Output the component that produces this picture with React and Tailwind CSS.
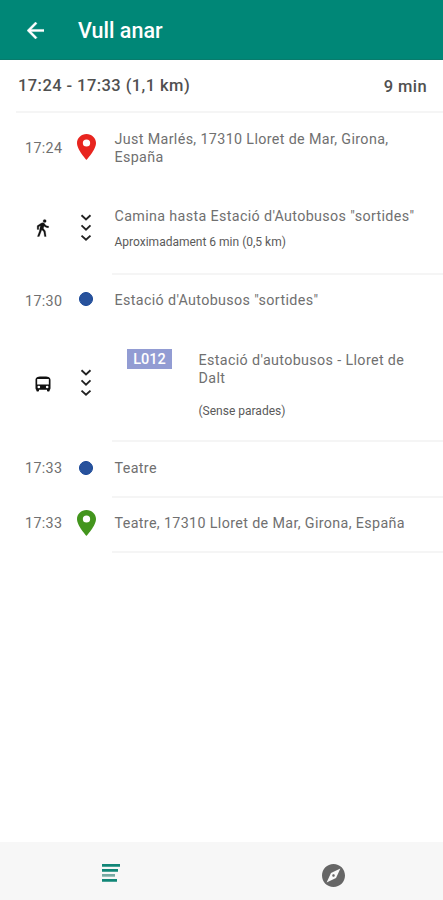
import React from "react";

const MAIN = "text-[14.3px] leading-[18px] tracking-[0.36px] text-[#707070]";
const SMALL = "text-[12px] leading-[16px] text-[#5a5a5a]";

function Pin({ className }) {
  return (
    <svg viewBox="5 2 14 20" preserveAspectRatio="none" className={`h-[26px] w-[19px] ${className}`} fill="currentColor">
      <path d="M12 2C8.13 2 5 5.13 5 9c0 5.25 7 13 7 13s7-7.75 7-13c0-3.87-3.13-7-7-7zm0 9.700a2.700 2.700 0 1 1 0-5.400 2.700 2.700 0 0 1 0 5.400z" />
    </svg>
  );
}

function Chevrons({ className }) {
  return (
    <svg viewBox="0 0 12 28" className={`mr-px h-7 w-3 ${className}`} fill="none" stroke="#222" strokeWidth="1.9">
      <path d="M1.5 1.2 6 5.4l4.5-4.2" />
      <path d="M1.5 11.4 6 15.6l4.5-4.2" />
      <path d="M1.5 21.6 6 25.8l4.5-4.2" />
    </svg>
  );
}

function Dot({ className }) {
  return <span className={`h-[14px] w-[14px] rounded-full border border-[#164596] bg-[#28529c] ${className}`} />;
}

function Walk() {
  return (
    <svg viewBox="0 0 24 24" className="mb-[3px] h-5 w-5" fill="#111" stroke="#111" strokeWidth=".3">
      <path d="M14 5.500a1.900 1.900 0 1 0 0-3.800 1.900 1.900 0 0 0 0 3.800zM9.700 6.200 5 9.400v4.300h1.900v-3.200l2-1.200-1.300 6.500-2.300 6.400h2.200l2.200-5.800.9-2.200 2.300 2.300.9 5.700h2l-1-6.700-2.300-2.800.7-3.200c1.200 1.400 3 2.100 5.500 2.100V9.700c-2 0-3.300-.7-4.200-2l-.8-1.200c-.8-.9-1.700-1-2.600-.7z" />
    </svg>
  );
}

function Bus() {
  return (
    <svg viewBox="0 0 24 24" className="h-5 w-5" fill="#111">
      <path fillRule="evenodd" d="M12 3c-5.500 0-9 .5-9 4.300V17c0 .9.400 1.700 1 2.200V20c0 .6.400 1 1 1h1.200c.6 0 1-.4 1-1v-1h9.600v1c0 .6.400 1 1 1H19c.6 0 1-.4 1-1v-.8c.6-.5 1-1.300 1-2.200V7.300C21 3.500 17.500 3 12 3zM5 6h14v6.500H5zM7 14a1.600 1.600 0 1 0 0 3.200 1.600 1.600 0 0 0 0-3.200zm10 0a1.600 1.600 0 1 0 0 3.200 1.600 1.600 0 0 0 0-3.200z" />
    </svg>
  );
}

function Row({ lead, marker, className, line = true, children }) {
  return (
    <div className={`flex ${className}`}>
      <div className="flex w-[72px] shrink-0 items-center pl-[25px] text-[14.3px] tracking-[0.36px] text-[#707070]">{lead}</div>
      <div className="flex w-7 shrink-0 items-center justify-center">{marker}</div>
      <div className={`ml-3 flex flex-1 flex-col justify-center pl-[2.500px] ${line ? "border-b-2 border-[#f5f5f5]" : ""}`}>
        {children}
      </div>
    </div>
  );
}

export default function App() {
  return (
    <div className="flex h-[900px] w-[443px] flex-col overflow-hidden bg-white font-[Roboto,sans-serif]">
      <header className="flex h-[60px] shrink-0 items-center border-b border-[#087b6c] bg-[#008777] text-white">
        <svg viewBox="4 4 16 16" className="mt-[2px] ml-[27px] h-[17px] w-[17px]" fill="currentColor" stroke="currentColor" strokeWidth=".4">
          <path d="M20 11H7.830l5.590-5.590L12 4l-8 8 8 8 1.410-1.410L7.830 13H20v-2z" />
        </svg>
        <h1 className="mt-[3px] ml-[34px] text-[21.5px] font-medium">Vull anar</h1>
      </header>
      <main className="flex flex-1 flex-col">
        <div className="ml-4 flex h-[53px] items-center justify-between border-b-2 border-[#f5f5f5] pr-4 pl-[2px] text-[16.500px] font-medium text-[#505050]">
          <span className="pt-[2px] tracking-[0.43px]">17:24 - 17:33 (1,1 km)</span>
          <span className="pt-[4px] tracking-[0.4px]">9 min</span>
        </div>
        <Row className="h-[71px]" line={false} lead={<span className="pt-px">17:24</span>} marker={<Pin className="mb-[3px] text-[#e8251f]" />}>
          <p className={`mb-px ${MAIN}`}>Just Marlés, 17310 Lloret de Mar, Girona,<br />España</p>
        </Row>
        <Row className="h-[91px]" lead={<span className="ml-[8px]"><Walk /></span>} marker={<Chevrons className="mb-[4px]" />}>
          <p className={MAIN}>Camina hasta Estació d'Autobusos "sortides"</p>
          <p className={`mt-[9px] ${SMALL}`}>Aproximadament 6 min (0,5 km)</p>
        </Row>
        <Row className="h-[51px]" line={false} lead={<span className="pt-[3px]">17:30</span>} marker={<Dot className="mb-[3px]" />}>
          <p className={`mb-[2px] ${MAIN}`}>Estació d'Autobusos "sortides"</p>
        </Row>
        <Row className="h-[116px]" lead={<span className="ml-[8px]"><Bus /></span>} marker={<Chevrons className="mb-[2px]" />}>
          <div className="mt-[4px] flex">
            <span className="mt-[-2px] ml-[12.500px] flex h-5 w-[45px] items-center justify-center bg-[#929cd3] pt-px text-[14.500px] font-medium text-white">L012</span>
            <div className="ml-[26.500px]">
              <p className={MAIN}>Estació d'autobusos - Lloret de<br />Dalt</p>
              <p className={`mt-4 ${SMALL}`}>(Sense parades)</p>
            </div>
          </div>
        </Row>
        <Row className="h-[56px]" lead={<span className="pb-[2px]">17:33</span>} marker={<Dot className="mb-[5px]" />}>
          <p className={`mb-[3px] ${MAIN}`}>Teatre</p>
        </Row>
        <Row className="h-[55px]" lead={<span className="pb-[3px]">17:33</span>} marker={<Pin className="mb-[6px] text-[#43951d]" />}>
          <p className={`mb-[4px] ${MAIN}`}>Teatre, 17310 Lloret de Mar, Girona, España</p>
        </Row>
      </main>
      <nav className="grid h-[58px] shrink-0 grid-cols-2 items-center justify-items-center bg-[#f7f7f7]">
        <svg viewBox="0 0 18 18" className="mt-[4px] h-[18px] w-[18px]" fill="#118677">
          <path d="M0 0h18v2.700H0zM0 5h16v2.700H0zM0 15h15v2.700H0z" />
          <path d="M0 10h13v2.700H0z" fill="#77aaa3" />
        </svg>
        <svg viewBox="2 2 20 20" className="mt-[8px] ml-[2px] h-[23px] w-[23px]" fill="#666">
          <path d="M12 10.900c-.61 0-1.100.49-1.100 1.100s.49 1.100 1.100 1.100c.61 0 1.100-.49 1.100-1.100s-.49-1.100-1.100-1.100zM12 2C6.480 2 2 6.480 2 12s4.480 10 10 10 10-4.480 10-10S17.520 2 12 2zm2.190 12.190L6 18l3.810-8.190L18 6l-3.810 8.190z" />
        </svg>
      </nav>
    </div>
  );
}
